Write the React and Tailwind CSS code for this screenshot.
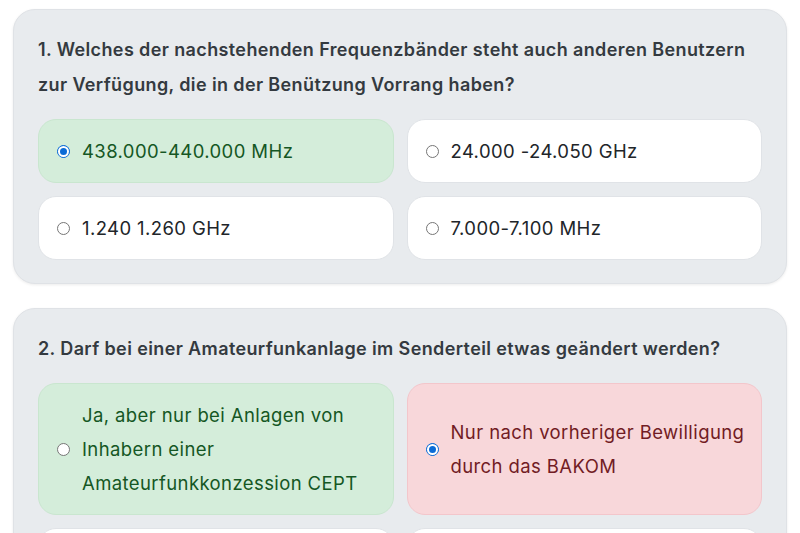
import React from 'react';

const questions = [
  {
    title: '1. Welches der nachstehenden Frequenzbänder steht auch anderen Benutzern zur Verfügung, die in der Benützung Vorrang haben?',
    options: [
      { label: '438.000-440.000 MHz', state: 'correct', checked: true },
      { label: '24.000 -24.050 GHz' },
      { label: '1.240 1.260 GHz' },
      { label: '7.000-7.100 MHz' },
    ],
  },
  {
    title: '2. Darf bei einer Amateurfunkanlage im Senderteil etwas geändert werden?',
    options: [
      { label: 'Ja, aber nur bei Anlagen von Inhabern einer Amateurfunkkonzession CEPT', state: 'correct' },
      { label: 'Nur nach vorheriger Bewilligung durch das BAKOM', state: 'wrong', checked: true },
      { label: 'Ja, ohne Einschränkung' },
      { label: 'Nein, unter keinen Umständen' },
    ],
  },
];

const Radio = ({ checked }) =>
  checked ? (
    <span className="shrink-0 w-[13px] h-[13px] rounded-full bg-[#0b6bd6] border-[1.5px] border-[#0b6bd6] flex items-center justify-center">
      <span className="w-[7px] h-[7px] rounded-full bg-[#0b6bd6] ring-2 ring-white" />
    </span>
  ) : (
    <span className="shrink-0 w-[13px] h-[13px] rounded-full bg-white border-[1.5px] border-[#767676]" />
  );

const Option = ({ label, state, checked }) => {
  const tone =
    state === 'correct'
      ? 'bg-[#d4edda] border-[#c9e6cf] text-[#155724]'
      : state === 'wrong'
      ? 'bg-[#f8d7da] border-[#f3c6cb] text-[#721c24]'
      : 'bg-white border-[#e0e3e7] text-[#212529]';

  return (
    <label className={`flex items-center gap-[12px] pl-[18px] pr-3 py-[14px] rounded-[18px] border ${tone}`}>
      <Radio checked={checked} />
      <span className="text-[18.5px] tracking-[0.4px] leading-[34px]">{label}</span>
    </label>
  );
};

export default function App() {
  return (
    <div className="min-h-screen bg-white px-[13px] pt-[9px] flex flex-col gap-6" style={{ fontFamily: 'Inter, "Noto Sans", sans-serif' }}>
      {questions.map((q) => (
        <div
          key={q.title}
          className="bg-[#e8ebee] border border-[#dfe2e6] rounded-[22px] shadow-[0_1px_3px_rgba(0,0,0,0.08)] px-6 pt-[22px] pb-[23px]"
        >
          <div className="text-[18px] font-semibold leading-[35px] text-[#343a40] tracking-[0.38px] mb-[17px] pr-1">
            {q.title}
          </div>
          <div className="grid grid-cols-2 gap-x-[13px] gap-y-[13px]">
            {q.options.map((o) => (
              <Option key={o.label} {...o} />
            ))}
          </div>
        </div>
      ))}
    </div>
  );
}
